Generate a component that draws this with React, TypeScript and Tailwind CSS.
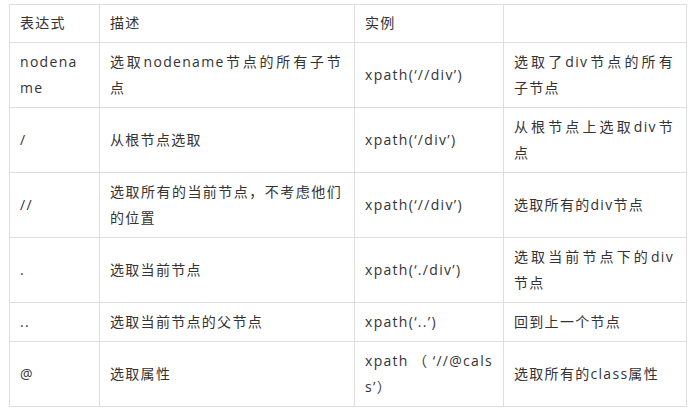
const rows = [
  ["表达式", "描述", "实例", ""],
  ["nodename", "选取nodename节点的所有子节点", "xpath(‘//div’)", "选取了div节点的所有子节点"],
  ["/", "从根节点选取", "xpath(‘/div’)", "从根节点上选取div节点"],
  ["//", "选取所有的当前节点，不考虑他们的位置", "xpath(‘//div’)", "选取所有的div节点"],
  [".", "选取当前节点", "xpath(‘./div’)", "选取当前节点下的div节点"],
  ["..", "选取当前节点的父节点", "xpath(‘..’)", "回到上一个节点"],
  ["@", "选取属性", "xpath（‘//@calss’）", "选取所有的class属性"],
];

export default function App() {
  return (
    <div className="w-[694px] h-[412px] bg-white pt-[4px] pl-[9px] font-['Open_Sans','Noto_Sans_CJK_SC',sans-serif] text-[14px] leading-[26px] tracking-[1.3px] text-[#333333]">
      <table className="table-fixed border-collapse w-[677px]">
        <colgroup>
          <col className="w-[90px]" />
          <col className="w-[255px]" />
          <col className="w-[149px]" />
          <col className="w-[183px]" />
        </colgroup>
        <tbody>
          {rows.map((r, i) => (
            <tr key={i}>
              {r.map((c, j) => (
                <td
                  key={j}
                  className={`border border-[#dedede] pl-[10px] ${j === 2 ? "pr-[10px]" : "pr-[12px]"} ${i === 0 ? "pt-[5px] pb-[6px]" : "py-[6px]"} align-middle text-justify break-all`}
                >
                  {c}
                </td>
              ))}
            </tr>
          ))}
        </tbody>
      </table>
    </div>
  );
}
